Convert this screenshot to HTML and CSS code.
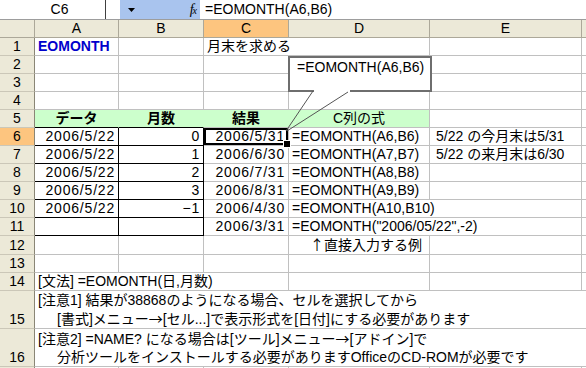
FILE: index.html
```html
<!DOCTYPE html>
<html lang="ja">
<head>
    <meta charset="UTF-8">
    <meta name="viewport" content="width=device-width, initial-scale=1.0">
    <title>EOMONTH</title>
    <link rel="stylesheet" href="styles.css">
</head>
<body>
<div class="page">
    <!-- name box + formula bar -->
    <div class="formula-bar">
        <div class="name-box">C6</div>
        <div class="name-gap"></div>
        <div class="fx-box">
            <svg class="drop" width="7" height="4" viewBox="0 0 7 4"><path d="M0 0h7L3.5 4z"/></svg>
            <span class="fx">f<span class="fx-x">x</span></span>
        </div>
        <div class="formula">=EOMONTH(A6,B6)</div>
    </div>

    <table class="grid">
        <colgroup>
            <col class="w-head"><col class="w-a"><col class="w-b"><col class="w-c"><col class="w-d"><col class="w-e"><col class="w-f">
        </colgroup>
        <tr class="col-head">
            <th class="corner"></th><th>A</th><th>B</th><th class="on">C</th><th>D</th><th>E</th><th></th>
        </tr>
        <tr>
            <th class="rh">1</th><td class="title">EOMONTH</td><td></td><td colspan="2">月末を求める</td><td></td><td></td>
        </tr>
        <tr><th class="rh">2</th><td></td><td></td><td></td><td></td><td></td><td></td></tr>
        <tr><th class="rh">3</th><td></td><td></td><td></td><td></td><td></td><td></td></tr>
        <tr><th class="rh">4</th><td></td><td></td><td></td><td></td><td></td><td></td></tr>
        <tr>
            <th class="rh">5</th>
            <td class="green label bt">データ</td>
            <td class="green label bt">月数</td>
            <td class="green label">結果</td>
            <td class="green center last">C列の式</td>
            <td></td><td></td>
        </tr>
        <tr>
            <th class="rh on">6</th><td class="num bx">2006/5/22</td><td class="num bx">0</td><td class="num sel">2006/5/31</td><td>=EOMONTH(A6,B6)</td><td class="note">5/22 の今月末は5/31</td><td></td>
        </tr>
        <tr>
            <th class="rh">7</th><td class="num bx">2006/5/22</td><td class="num bx">1</td><td class="num">2006/6/30</td><td>=EOMONTH(A7,B7)</td><td class="note">5/22 の来月末は6/30</td><td></td>
        </tr>
        <tr>
            <th class="rh">8</th><td class="num bx">2006/5/22</td><td class="num bx">2</td><td class="num">2006/7/31</td><td>=EOMONTH(A8,B8)</td><td></td><td></td>
        </tr>
        <tr>
            <th class="rh">9</th><td class="num bx">2006/5/22</td><td class="num bx">3</td><td class="num">2006/8/31</td><td>=EOMONTH(A9,B9)</td><td></td><td></td>
        </tr>
        <tr>
            <th class="rh">10</th><td class="num bx">2006/5/22</td><td class="num bx">&minus;1</td><td class="num">2006/4/30</td><td colspan="2">=EOMONTH(A10,B10)</td><td></td>
        </tr>
        <tr>
            <th class="rh">11</th><td class="bx"></td><td class="bx"></td><td class="num">2006/3/31</td><td colspan="2">=EOMONTH("2006/05/22",-2)</td><td></td>
        </tr>
        <tr>
            <th class="rh">12</th><td></td><td></td><td></td><td class="pre">　 <span class="jp">↑</span>直接入力する例</td><td></td><td></td>
        </tr>
        <tr><th class="rh">13</th><td></td><td></td><td></td><td></td><td></td><td></td></tr>
        <tr>
            <th class="rh">14</th><td colspan="3">[文法] =EOMONTH(日,月数)</td><td></td><td></td><td></td>
        </tr>
        <tr class="tall">
            <th class="rh">15</th>
            <td colspan="6" class="multi">[注意1] 結果が38868のようになる場合、セルを選択してから<br><span class="indent">[書式]メニュー<span class="jp">→</span>[セル...]で表示形式を[日付]にする必要があります</span></td>
        </tr>
        <tr class="tall">
            <th class="rh">16</th>
            <td colspan="6" class="multi">[注意2] =NAME? になる場合は[ツール]メニュー<span class="jp">→</span>[アドイン]で<br><span class="indent">分析ツールをインストールする必要がありますOfficeのCD-ROMが必要です</span></td>
        </tr>
        <tr><th class="rh"></th><td></td><td></td><td></td><td></td><td></td><td></td></tr>
    </table>

    <!-- callout over the sheet -->
    <div class="callout">=EOMONTH(A6,B6)</div>
    <svg class="callout-tail" width="80" height="46" viewBox="0 0 80 46">
        <rect x="34" y="0" width="36" height="3" fill="#fff"/>
        <path d="M33 2L6 42M68 3L7 42" stroke="#555" stroke-width="1" fill="none"/>
    </svg>
</div>
</body>
</html>
```

FILE: styles.css
```css
* {
    box-sizing: border-box;
}

body {
    margin: 0;
    overflow: hidden;
    background: #fff;
    color: #000;
    font-family: "Liberation Sans", "Noto Sans CJK JP", sans-serif;
    font-size: 14px;
}

.page {
    position: relative;
    width: 586px;
    height: 368px;
    overflow: hidden;
}

.jp {
    font-family: "Noto Sans CJK JP", sans-serif;
}

/* formula bar */
.formula-bar {
    display: flex;
    height: 20px;
    line-height: 19px;
    border-bottom: 1px solid #9d9d9d;
}

.name-box {
    width: 106px;
    padding-left: 14px;
    text-align: center;
    border-right: 1px solid #404040;
}

.name-gap {
    width: 14px;
}

.fx-box {
    width: 80px;
    display: flex;
    align-items: center;
    justify-content: space-between;
    padding: 0 3px 0 8px;
    background: #a9c4ee;
}

.drop {
    fill: #000;
}

.fx {
    font-family: "Liberation Serif", serif;
    font-style: italic;
    font-size: 14px;
}

.fx-x {
    font-size: 10px;
    margin-left: -1px;
}

.formula {
    padding-left: 5px;
}

/* grid */
.grid {
    border-collapse: separate;
    border-spacing: 0;
    table-layout: fixed;
    width: 606px;
}

.w-head { width: 35px; }
.w-a { width: 84px; }
.w-b { width: 85px; }
.w-c { width: 85px; }
.w-d { width: 141px; }
.w-e { width: 152px; }
.w-f { width: 24px; }

.grid th,
.grid td {
    height: 18px;
    padding: 0 3px;
    line-height: 17px;
    font-weight: normal;
    text-align: left;
    vertical-align: bottom;
    white-space: nowrap;
    overflow: visible;
    border-right: 1px solid #c0c0c0;
    border-bottom: 1px solid #c0c0c0;
}

.col-head th {
    text-align: center;
    background: #ece9d8;
    border-right: 1px solid #aca899;
    border-bottom: 1px solid #aca899;
}

.grid th.rh {
    padding: 0;
    text-align: center;
    background: #ece9d8;
    border-right: 1px solid #8a8676;
    border-bottom: 1px solid #cbc7b8;
}

.grid th.on {
    background: #fdc57f;
}

.grid td.title {
    color: #0000cc;
    font-weight: bold;
}

.grid td.num {
    text-align: right;
    letter-spacing: 0.8px;
}

.grid td.note {
    padding-left: 6px;
}

.grid td.label {
    text-align: center;
    font-weight: bold;
}

.grid td.center {
    text-align: center;
}

.grid td.green {
    background: #ccffcc;
    border-right-color: #ccffcc;
}

.grid td.green.last {
    border-right-color: #c0c0c0;
}

.grid td.bt {
    border-bottom-color: #000;
}

.grid td.bx {
    border-right-color: #000;
    border-bottom-color: #000;
}

.grid td.sel {
    position: relative;
    box-shadow: inset 0 0 0 2px #000;
}

.grid td.sel::after {
    content: "";
    position: absolute;
    right: -3px;
    bottom: -3px;
    width: 6px;
    height: 6px;
    background: #000;
    border: 1px solid #fff;
}

.pre {
    white-space: pre;
}

.tall th,
.tall td {
    height: 37px;
}

.grid td.multi {
    line-height: 18px;
}

.indent {
    padding-left: 19px;
}

/* callout */
.callout {
    position: absolute;
    left: 288px;
    top: 56px;
    width: 144px;
    height: 36px;
    padding: 0 0 0 7px;
    line-height: 18px;
    background: #fff;
    border: 2px solid #6e6e6e;
}

.callout-tail {
    position: absolute;
    left: 280px;
    top: 89px;
}
```
